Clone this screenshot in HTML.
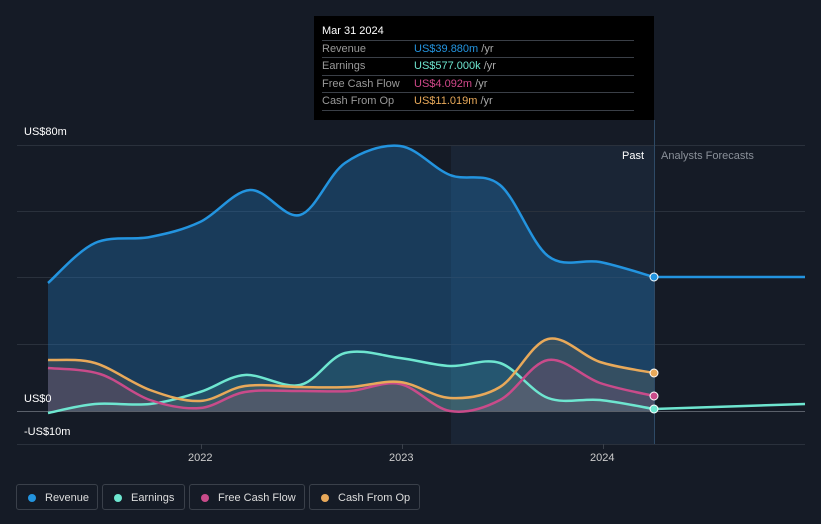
<!DOCTYPE html>
<html><head><meta charset="utf-8"><style>
body{margin:0;width:821px;height:524px;background:#151b26;font-family:"Liberation Sans",sans-serif;overflow:hidden;position:relative}
.t{position:absolute;font-size:11px;color:#fff}
.tip{position:absolute;left:314px;top:16px;width:340px;height:104px;background:#000}
.tip .h{position:absolute;left:8px;top:9px;font-size:11px;color:#fff}
.row{position:absolute;left:8px;width:312px;height:17px;border-top:1px solid #3a3f47;font-size:11px;color:#999;line-height:17px}
.row span.v{position:absolute;left:92px}
.leg{position:absolute;top:484px;height:26px;border:1px solid #3a404a;border-radius:3px;font-size:11px;color:#ddd;line-height:26px;box-sizing:border-box}
.leg i{position:absolute;left:11px;top:9px;width:8px;height:8px;border-radius:50%}
.leg span{position:absolute;left:28px}
</style></head><body>
<svg width="821" height="524" style="position:absolute;left:0;top:0">
<rect x="451" y="145" width="203" height="299" fill="#1a2535"/>
<g stroke="#2a313c" stroke-width="1">
<line x1="17" x2="805" y1="145.5" y2="145.5"/><line x1="17" x2="805" y1="211.5" y2="211.5"/>
<line x1="17" x2="805" y1="277.5" y2="277.5"/><line x1="17" x2="805" y1="344.5" y2="344.5"/>
<line x1="17" x2="805" y1="444.5" y2="444.5"/></g>
<line x1="17" x2="805" y1="411.5" y2="411.5" stroke="#5a606a"/>
<line x1="654.5" x2="654.5" y1="120" y2="444" stroke="#2e4a66"/>
<g stroke="#3a404a"><line x1="201.5" x2="201.5" y1="444" y2="449"/><line x1="402.5" x2="402.5" y1="444" y2="449"/><line x1="603.5" x2="603.5" y1="444" y2="449"/></g>
<g id="g"></g>
</svg>
<div class="t" style="left:24px;top:126px">US$80m</div>
<div class="t" style="left:24px;top:393px">US$0</div>
<div class="t" style="left:24px;top:426px">-US$10m</div>
<div class="t" style="left:622px;top:150px">Past</div>
<div class="t" style="left:661px;top:150px;color:#8a9099">Analysts Forecasts</div>
<div class="t" style="left:188px;top:452px;color:#ccc">2022</div>
<div class="t" style="left:389px;top:452px;color:#ccc">2023</div>
<div class="t" style="left:590px;top:452px;color:#ccc">2024</div>
<div class="tip"><div class="h">Mar 31 2024</div>
<div class="row" style="top:24px">Revenue<span class="v" style="color:#2394df">US$39.880m <span style="color:#aaa">/yr</span></span></div>
<div class="row" style="top:41px">Earnings<span class="v" style="color:#6ee6d0">US$577.000k <span style="color:#aaa">/yr</span></span></div>
<div class="row" style="top:59px">Free Cash Flow<span class="v" style="color:#d0488a">US$4.092m <span style="color:#aaa">/yr</span></span></div>
<div class="row" style="top:76px;border-bottom:1px solid #3a3f47">Cash From Op<span class="v" style="color:#e8a95a">US$11.019m <span style="color:#aaa">/yr</span></span></div>
</div>
<div class="leg" style="left:16px;width:82px"><i style="background:#2394df"></i><span>Revenue</span></div>
<div class="leg" style="left:102px;width:83px"><i style="background:#6ee6d0"></i><span>Earnings</span></div>
<div class="leg" style="left:189px;width:116px"><i style="background:#c94b8a"></i><span>Free Cash Flow</span></div>
<div class="leg" style="left:309px;width:111px"><i style="background:#e8a95a"></i><span>Cash From Op</span></div>
<script>
function sm(p){let d="M"+p[0][0]+","+p[0][1];for(let i=0;i<p.length-1;i++){const a=p[i-1]||p[i],b=p[i],c=p[i+1],e=p[i+2]||c;const k=6;d+=" C"+(b[0]+(c[0]-a[0])/k)+","+(b[1]+(c[1]-a[1])/k)+" "+(c[0]-(e[0]-b[0])/k)+","+(c[1]-(e[1]-b[1])/k)+" "+c[0]+","+c[1];}return d;}
const S=[
["#2394df","rgba(35,120,190,0.35)",[[48,283],[95,243],[150,237],[200,222],[250,190],[300,215],[345,163],[400,146],[450,175],[500,185],[548,256],[600,262],[654,277]],[[654,277],[805,277]]],
["#6ee6d0","rgba(110,230,208,0.12)",[[48,413],[95,404],[150,404],[200,392],[245,375],[300,385],[345,353],[400,358],[450,366],[500,363],[548,398],[600,400],[654,409]],[[654,409],[805,404]]],
["#c94b8a","rgba(201,75,138,0.15)",[[48,368],[100,374],[150,400],[200,408],[245,392],[300,391],[350,391],[400,384],[450,411],[500,400],[548,360],[600,383],[654,396]],null],
["#e8a95a","rgba(232,169,90,0.12)",[[48,360],[95,363],[150,390],[200,401],[245,386],[300,387],[350,387],[400,382],[450,398],[500,387],[548,339],[600,362],[654,373]],null]];
let h="";
for(const s of S){const d=sm(s[2]);h+=`<path d="${d} L654,411 L48,411 Z" fill="${s[1]}"/>`;}
for(const s of S){h+=`<path d="${sm(s[2])}" fill="none" stroke="${s[0]}" stroke-width="2.5"/>`;if(s[3])h+=`<path d="M${s[3][0]} L${s[3][1]}" fill="none" stroke="${s[0]}" stroke-width="2.5"/>`;const l=s[2][s[2].length-1];h+=`<circle cx="${l[0]}" cy="${l[1]}" r="4" fill="${s[0]}" stroke="#fff" stroke-width="1"/>`;}
document.getElementById("g").innerHTML=h;
</script>
</body></html>
